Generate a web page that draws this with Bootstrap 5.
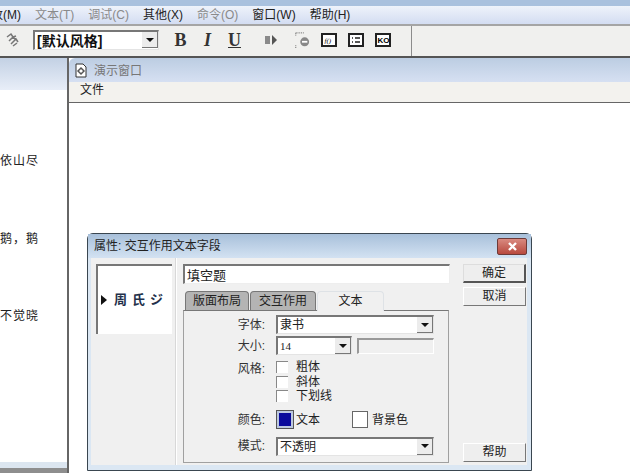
<!DOCTYPE html>
<html lang="zh">
<head>
<meta charset="UTF-8">
<title>演示窗口</title>
<link href="https://cdn.jsdelivr.net/npm/bootstrap@5.3.2/dist/css/bootstrap.min.css" rel="stylesheet">
<style>
html, body { height: 473px; overflow: hidden; }
body { font-family: "Liberation Sans", "Noto Sans CJK SC", sans-serif; font-size: 12px; color: #222; background: #f0f0ee; position: relative; }
.top-strip { height: 6px; background: #a9c1de; }
.menu-bar { height: 20px; padding-left: 37px; gap: 14px; line-height: 19px; white-space: nowrap; background: linear-gradient(#eef3fb, #e6ecf8 30%, #d3ddf2); border-bottom: 2px solid #a5a5a5; }
.menu-first { margin-left: -58px; }
.menu-off { color: #8a8a8a; }
.tool-bar { height: 32px; background: #f0f0ee; border-bottom: 2px solid #555; }
.tool-pad { width: 412px; height: 30px; border-right: 1px solid #8c8c8c; padding: 0 0 2px 5px; }
.style-box { width: 126px; height: 20px; margin-left: 13px; background: #fff; border: 1px solid #e4e4e4; border-top: 2px solid #777; border-left: 2px solid #777; font-size: 14px; font-weight: 700; line-height: 18px; padding-left: 2px; color: #111; position: relative; }
.fmt-btn { font-family: "Liberation Serif", serif; font-weight: 700; font-size: 18px; width: 27px; text-align: center; color: #333; }
.tool-gap { margin-left: 11px; }
.work-area { height: 415px; }
.left-pane { width: 69px; flex: none; background: #fff; border-right: 2px solid #666; overflow: hidden; display: flex; flex-direction: column; }
.left-head { height: 32px; flex: none; margin-bottom: 63px; background: linear-gradient(#c3d1e4, #e8eef8); }
.left-line { height: 77.5px; flex: none; white-space: nowrap; font-size: 12px; letter-spacing: 1px; line-height: 16px; color: #222; }
.left-foot { margin-top: auto; height: 11px; flex: none; background: linear-gradient(#dce6f0 50%, #8e8e8e 50%); }
.doc-win { flex: 1; background: #fff; }
.doc-title { height: 24px; padding: 1px 0 0 6px; gap: 7px; color: #777; background: linear-gradient(#bccde2, #d6e0f2); border-top-left-radius: 6px; }
.doc-menu { height: 21px; padding-left: 11px; line-height: 17px; background: #f3f2ee; border-bottom: 1px solid #666; }
.prop-dlg { position: absolute; left: 87px; top: 233px; width: 445px; height: 238px; background: #dbe7f3; border: 1px solid #3a4650; border-radius: 6px 6px 0 0; }
.dlg-title { height: 24px; padding: 3px 4px 0 6px; background: linear-gradient(#a8c0da, #d3e2f2); color: #222; }
.dlg-close { width: 30px; height: 17px; margin-top: 1px; background: linear-gradient(#d98a80, #b8493e); border: 1px solid #6d3a38; border-radius: 2px; }
.dlg-body { margin: 0 4px 0 3px; height: 207px; background: #f0f0f0; padding: 6px 0 0 5px; }
.preview-box { width: 76px; height: 70px; background: #fff; border-top: 2px solid #777; border-left: 2px solid #777; padding-left: 3px; gap: 7px; flex: none; }
.preview-txt { font-size: 13px; font-weight: 700; letter-spacing: 5px; color: #23304a; white-space: nowrap; }
.dlg-rule { width: 2px; height: 207px; margin: -6px 0 0 3px; background: #d8d8d8; border-right: 1px solid #fff; flex: none; }
.dlg-mid { width: 268px; margin-left: 6px; flex: none; }
.name-input.form-control { height: 20px; width: 267px; padding: 0 2px; font-size: 13px; border-radius: 0; border: 1px solid #eee; border-top: 2px solid #777; border-left: 2px solid #777; line-height: 18px; color: #222; }
.tab-row { margin-top: 7px; padding-left: 2px; border-bottom: 0; height: 19px; flex-wrap: nowrap; gap: 1px; }
.tab-row .nav-link { height: 19px; padding: 0; text-align: center; color: #222; font-size: 12px; line-height: 19px; background: #b4b4b4; border: 1px solid #777; border-bottom: 0; border-radius: 4px 4px 0 0; }
.tab-row .nav-link.active { background: #f0f0f0; position: relative; z-index: 1; height: 20px; color: #222; }
.tab-one { width: 64px; }
.tab-two { width: 66px; }
.tab-three { width: 67px; }
.tab-panel { width: 266px; height: 153px; border: 1px solid #a0a0a0; border-top: 1px solid #777; padding-top: 4px; }
.field-row { gap: 8px; white-space: nowrap; }
.field-lbl { width: 84px; padding-right: 3px; text-align: right; flex: none; color: #333; }
.row-gap-a { margin-top: 2px; }
.row-gap-b { margin-top: 5px; }
.row-gap-c { margin-top: 7px; }
.combo { height: 19px; background: #fff; border-top: 2px solid #777; border-left: 2px solid #777; border-right: 1px solid #e4e4e4; border-bottom: 1px solid #e4e4e4; padding-left: 2px; line-height: 17px; position: relative; font-size: 12px; color: #222; }
.combo-wide { width: 158px; }
.combo-small { width: 76px; font-family: "Liberation Serif", serif; font-size: 11px; }
.combo-arrow { position: absolute; right: 0; top: 0; width: 16px; height: 16px; background: #ececec; border-right: 1px solid #777; border-bottom: 1px solid #777; display: flex; align-items: center; justify-content: center; }
.combo-arrow::after { content: ""; border-left: 4px solid transparent; border-right: 4px solid transparent; border-top: 4px solid #111; }
.blank-box { width: 77px; height: 16px; margin-left: -3px; background: #f0f0f0; border-top: 2px solid #999; border-left: 2px solid #999; border-right: 1px solid #fff; border-bottom: 1px solid #fff; }
.check-stack { line-height: 14.5px; }
.tick-box { width: 12px; height: 12px; background: #fff; border-top: 1px solid #888; border-left: 1px solid #888; flex: none; }
.color-row { gap: 0; }
.color-row .field-lbl { margin-right: 8px; }
.swatch-blue { width: 16px; height: 17px; background: #0a0a9c; border: 2px solid #bcc8e0; outline: 1px solid #555; flex: none; margin: 0 3px 0 1px; }
.swatch-white { width: 16px; height: 17px; background: #fff; border: 1px solid #666; flex: none; margin: 0 4px 0 32px; }
.dlg-side { width: 63px; margin-left: 12px; flex: none; height: 198px; }
.side-btn.btn { height: 19px; width: 63px; padding: 0; border-radius: 0; font-size: 12px; line-height: 17px; color: #222; background: #eee; border: 1px solid #fff; border-right-color: #777; border-bottom-color: #777; }
.side-btn.is-default { border-right-width: 2px; border-bottom-width: 2px; border-color: #ddd #555 #555 #ddd; }
</style>
</head>
<body>

<div class="top-strip"></div>
<div class="menu-bar d-flex">
  <span class="menu-first">修改(M)</span>
  <span class="menu-off">文本(T)</span>
  <span class="menu-off">调试(C)</span>
  <span>其他(X)</span>
  <span class="menu-off">命令(O)</span>
  <span>窗口(W)</span>
  <span>帮助(H)</span>
</div>

<div class="tool-bar">
  <div class="tool-pad d-flex align-items-center">
    <svg width="15" height="16" viewBox="0 0 15 16"><path d="M2 5l4-3 2 3 3-1M4 9l4-4 3 3M6 12l5-5 2 3M8 14l4-3" fill="none" stroke="#777" stroke-width="1.5"/></svg>
    <div class="style-box">[默认风格]
      <span class="combo-arrow"></span>
    </div>
    <div class="d-flex ms-2">
      <span class="fmt-btn">B</span>
      <span class="fmt-btn fst-italic">I</span>
      <span class="fmt-btn text-decoration-underline">U</span>
    </div>
    <svg class="ms-3" width="14" height="12" viewBox="0 0 14 12"><path d="M1 2h5v8H1z" fill="#8a8a8a"/><path d="M8 1l5 5-5 5z" fill="#555"/></svg>
    <svg class="ms-3" width="16" height="20" viewBox="0 0 18 20"><circle cx="12" cy="12" r="5" fill="#888"/><path d="M9 12h6" stroke="#fff" stroke-width="2"/><path d="M2 2h10M2 2v4M2 16v3" stroke="#555" stroke-dasharray="1 1" fill="none"/></svg>
    <svg class="tool-gap" width="16" height="14" viewBox="0 0 16 14"><rect x="1" y="1" width="14" height="12" fill="#fff" stroke="#222" stroke-width="2"/><text x="3.5" y="10" font-size="7" font-family="Liberation Serif" font-style="italic">f()</text></svg>
    <svg class="tool-gap" width="16" height="14" viewBox="0 0 16 14"><rect x="1" y="1" width="14" height="12" fill="#fff" stroke="#222" stroke-width="2"/><path d="M4 5h1M7 5h5M4 9h1M7 9h5" stroke="#222" stroke-width="1.6"/></svg>
    <svg class="tool-gap" width="16" height="14" viewBox="0 0 16 14"><rect x="1" y="1" width="14" height="12" fill="#fff" stroke="#222" stroke-width="2"/><text x="2.5" y="10" font-size="8" font-weight="700" font-family="Liberation Sans">KO</text></svg>
  </div>
</div>

<div class="work-area d-flex">
  <div class="left-pane">
    <div class="left-head"></div>
    <div class="left-line">依山尽</div>
    <div class="left-line">鹅，鹅</div>
    <div class="left-line">不觉晓</div>
    <div class="left-foot"></div>
  </div>
  <div class="doc-win">
    <div class="doc-title d-flex align-items-center">
      <svg width="12" height="15" viewBox="0 0 12 15"><path d="M1 1h7l3 3v10H1z" fill="#fff" stroke="#333"/><path d="M6 5l3 3-3 3-3-3z" fill="none" stroke="#555" stroke-width="1.5"/></svg>
      <span>演示窗口</span>
    </div>
    <div class="doc-menu">文件</div>
  </div>
</div>

<div class="prop-dlg">
  <div class="dlg-title d-flex justify-content-between">
    <span>属性: 交互作用文本字段</span>
    <div class="dlg-close d-flex align-items-center justify-content-center">
      <svg width="11" height="9" viewBox="0 0 11 9"><path d="M2 1l7 7M9 1L2 8" stroke="#fff" stroke-width="2.4"/></svg>
    </div>
  </div>
  <div class="dlg-body d-flex">
    <div class="preview-box d-flex align-items-center">
      <svg width="6" height="10" viewBox="0 0 6 10"><path d="M0 0l6 5-6 5z" fill="#111"/></svg>
      <span class="preview-txt">周氏ジ</span>
    </div>
    <div class="dlg-rule"></div>
    <div class="dlg-mid">
      <input class="form-control name-input" value="填空题">
      <ul class="nav nav-tabs tab-row">
        <li class="nav-item"><a class="nav-link tab-one" href="#">版面布局</a></li>
        <li class="nav-item"><a class="nav-link tab-two" href="#">交互作用</a></li>
        <li class="nav-item"><a class="nav-link active tab-three" href="#">文本</a></li>
      </ul>
      <div class="tab-panel">
        <div class="field-row d-flex align-items-center">
          <span class="field-lbl">字体:</span>
          <div class="combo combo-wide">隶书<span class="combo-arrow"></span></div>
        </div>
        <div class="field-row d-flex align-items-center row-gap-a">
          <span class="field-lbl">大小:</span>
          <div class="combo combo-small">14<span class="combo-arrow"></span></div>
          <div class="blank-box"></div>
        </div>
        <div class="field-row d-flex row-gap-b">
          <span class="field-lbl">风格:</span>
          <div class="check-stack">
            <div class="d-flex align-items-center gap-2"><span class="tick-box"></span>粗体</div>
            <div class="d-flex align-items-center gap-2"><span class="tick-box"></span>斜体</div>
            <div class="d-flex align-items-center gap-2"><span class="tick-box"></span>下划线</div>
          </div>
        </div>
        <div class="field-row color-row d-flex align-items-center row-gap-c">
          <span class="field-lbl">颜色:</span>
          <span class="swatch-blue"></span>
          <span>文本</span>
          <span class="swatch-white"></span>
          <span>背景色</span>
        </div>
        <div class="field-row d-flex align-items-center mt-2">
          <span class="field-lbl">模式:</span>
          <div class="combo combo-wide">不透明<span class="combo-arrow"></span></div>
        </div>
      </div>
    </div>
    <div class="dlg-side d-flex flex-column">
      <button class="btn side-btn is-default mb-1">确定</button>
      <button class="btn side-btn">取消</button>
      <button class="btn side-btn mt-auto">帮助</button>
    </div>
  </div>
</div>

</body>
</html>
